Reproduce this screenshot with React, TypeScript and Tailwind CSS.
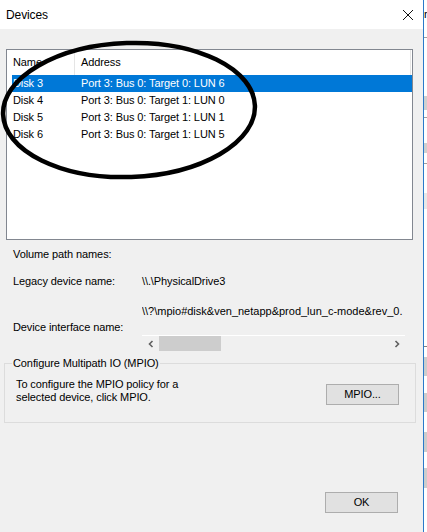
import { FC } from 'react'

const rows = [
    { name: 'Disk 3', address: 'Port 3: Bus 0: Target 0: LUN 6', selected: true },
    { name: 'Disk 4', address: 'Port 3: Bus 0: Target 1: LUN 0', selected: false },
    { name: 'Disk 5', address: 'Port 3: Bus 0: Target 1: LUN 1', selected: false },
    { name: 'Disk 6', address: 'Port 3: Bus 0: Target 1: LUN 5', selected: false },
]

const Chevron: FC<{ dir: 'left' | 'right' }> = ({ dir }) => (
    <svg width="6" height="8" viewBox="0 0 6 8">
        <path
            d={dir === 'left' ? 'M4.5 1 L1.5 4 L4.5 7' : 'M1.5 1 L4.5 4 L1.5 7'}
            fill="none"
            stroke="#606060"
            strokeWidth="1.6"
        />
    </svg>
)

const WinButton: FC<{ label: string; className?: string }> = ({ label, className }) => (
    <button
        className={
            'w-[73px] h-[21px] border border-[#adadad] bg-[#e1e1e1] flex items-center justify-center text-[11px] text-black ' +
            (className ?? '')
        }
    >
        {label}
    </button>
)

const App: FC = () => {
    return (
        <div className="w-[427px] h-[532px] flex relative overflow-hidden bg-white text-black text-[11px] tracking-[-0.1px] font-['Liberation_Sans',Arial,sans-serif]">
            <div className="w-[423px] h-full flex flex-col bg-[#f0f0f0]">
                {/* title bar */}
                <div className="h-[29px] bg-white flex items-center justify-between pl-[6px] pr-[10px] shrink-0">
                    <span className="text-[12px]">Devices</span>
                    <svg width="10" height="10" viewBox="0 0 10 10">
                        <path d="M0 0 L10 10 M10 0 L0 10" stroke="#111" strokeWidth="1" />
                    </svg>
                </div>

                {/* device list */}
                <div className="mt-[20px] ml-[6px] w-[407px] h-[191px] border border-[#828790] bg-white shrink-0">
                    <div className="h-[25px] flex items-center">
                        <div className="w-[68px] h-full border-r border-[#e5e5e5] pl-[6px] flex items-center">Name</div>
                        <div className="flex-1 h-full border-r border-[#e5e5e5] pl-[6px] mr-[1px] flex items-center">
                            Address
                        </div>
                    </div>
                    {rows.map((row, index) => (
                        <div
                            key={index}
                            className={
                                row.selected
                                    ? 'ml-[5px] h-[17px] flex items-center bg-[#0078d7] text-white'
                                    : 'ml-[5px] h-[17px] flex items-center'
                            }
                        >
                            <span className="w-[69px] pl-[1px]">{row.name}</span>
                            <span>{row.address}</span>
                        </div>
                    ))}
                </div>

                {/* path names */}
                <div className="mt-[6px] h-[16px] leading-[16px] pl-[13px]">Volume path names:</div>
                <div className="mt-[11px] h-[16px] leading-[16px] flex">
                    <span className="w-[142px] pl-[13px]">Legacy device name:</span>
                    <span>\\.\PhysicalDrive3</span>
                </div>
                <div className="mt-[14px] flex">
                    <span className="w-[142px] pl-[13px] pt-[16px] leading-[16px]">Device interface name:</span>
                    <div className="w-[263px] flex flex-col">
                        <div className="h-[16px] leading-[16px] whitespace-nowrap overflow-hidden tracking-normal">
                            \\?\mpio#disk&amp;ven_netapp&amp;prod_lun_c-mode&amp;rev_0.
                        </div>
                        <div className="mt-[16px] h-[16px] border-t border-white flex">
                            <div className="w-[17px] flex items-center justify-center">
                                <Chevron dir="left" />
                            </div>
                            <div className="w-[62px] h-[15px] bg-[#cdcdcd]" />
                            <div className="flex-1" />
                            <div className="w-[17px] flex items-center justify-center">
                                <Chevron dir="right" />
                            </div>
                        </div>
                    </div>
                </div>

                {/* MPIO group */}
                <fieldset className="mt-[4px] ml-[4px] w-[412px] h-[68px] border border-[#dcdcdc]">
                    <legend className="ml-[7px] px-[1px] leading-[16px]">Configure Multipath IO (MPIO)</legend>
                    <div className="flex justify-between items-start">
                        <p className="pl-[11px] pt-[7px] leading-[13px]">
                            To configure the MPIO policy for a
                            <br />
                            selected device, click MPIO.
                        </p>
                        <WinButton label="MPIO..." className="mt-[13px] mr-[16px]" />
                    </div>
                </fieldset>

                <WinButton label="OK" className="mt-[69px] self-end mr-[25px]" />
            </div>

            {/* window border and the window behind */}
            <div className="w-[1px] h-full bg-[#2b79c9]" />
            <div className="w-[3px] h-full flex flex-col bg-white">
                <div className="h-[29px] leading-[29px] overflow-hidden">r</div>
                <div className="mt-[8px] h-[1px] bg-[#a0a0a0]" />
                <div className="mt-[58px] h-[14px] bg-[#d0d0d0]" />
                <div className="mt-[7px] h-[1px] bg-[#a0a0a0]" />
                <div className="mt-[25px] h-[10px] bg-[#d0d0d0]" />
                <div className="mt-[10px] h-[1px] bg-[#a0a0a0]" />
                <div className="mt-[29px] h-[16px] bg-[#e8e8e8]" />
                <div className="mt-[137px] h-[1px] bg-[#808080]" />
                <div className="mt-[10px] h-[19px] bg-[#cdcdcd]" />
                <div className="mt-[17px] h-[19px] bg-[#cdcdcd]" />
                <div className="mt-[20px] h-[20px] bg-[#cdcdcd]" />
                <div className="mt-[16px] h-[20px] bg-[#cdcdcd]" />
            </div>

            {/* hand-drawn marker ellipse over the list */}
            <svg className="absolute top-0 left-0 pointer-events-none" width="427" height="532">
                <ellipse
                    cx="129"
                    cy="110"
                    rx="126"
                    ry="67"
                    transform="rotate(-2 129 110)"
                    fill="none"
                    stroke="#000"
                    strokeWidth="4.5"
                />
            </svg>
        </div>
    )
}

export default App
